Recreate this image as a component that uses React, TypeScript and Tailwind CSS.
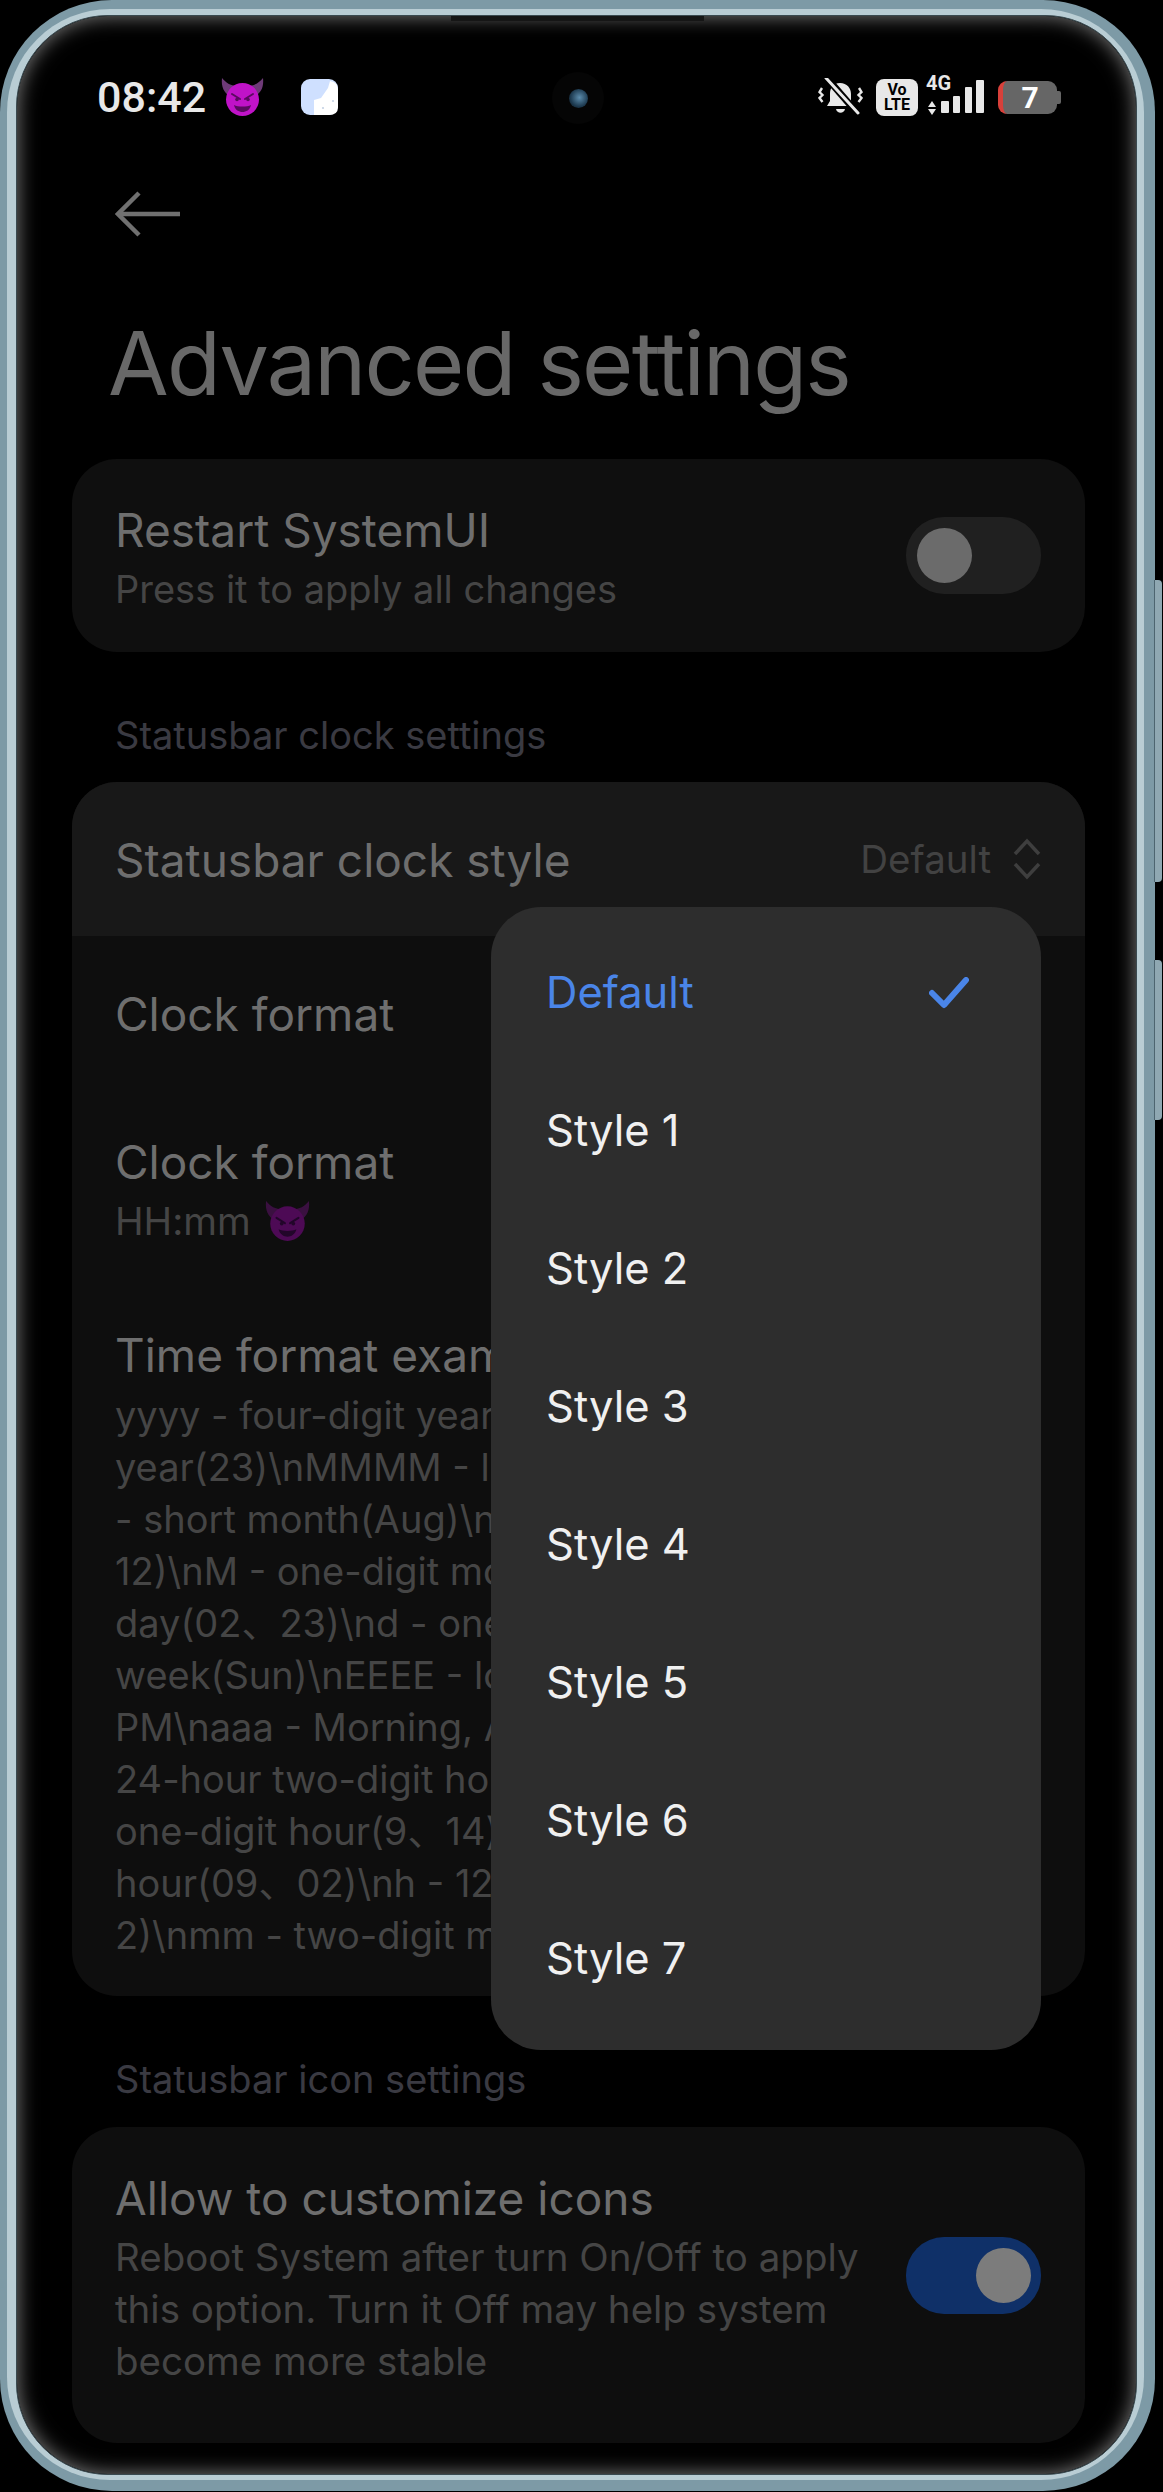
import React from "react";

function Devil({ className, face, horn, dark }: { className: string; face: string; horn: string; dark: string }) {
  return (
    <svg viewBox="0 0 43 38" className={className}>
      <path d="M1 0 C0 9 3 15 9 18 L17 8 C10 8 5 5 1 0Z" fill={horn} />
      <path d="M42 0 C43 9 40 15 34 18 L26 8 C33 8 38 5 42 0Z" fill={horn} />
      <circle cx="21.5" cy="21.5" r="16.5" fill={face} />
      <path d="M11 16 L19 21 M32 16 L24 21" stroke={dark} strokeWidth="2" strokeLinecap="round" />
      <circle cx="16" cy="21.5" r="1.8" fill={dark} />
      <circle cx="27" cy="21.5" r="1.8" fill={dark} />
      <path d="M13 27 C17 29 26 29 30 27 C29 32 25 34 21.5 34 C18 34 14 32 13 27Z" fill={dark} />
    </svg>
  );
}

function CatIcon() {
  return (
    <svg viewBox="0 0 37 36" className="w-[37px] h-[36px]">
      <rect width="37" height="36" rx="9" fill="#cfe0ff" />
      <path d="M13 36 L13 21 L20 19 L27 9 L29 2 Q37 3 37 11 L37 28 Q37 36 28 36Z" fill="#ffffff" />
      <circle cx="22" cy="29" r="1.1" fill="#c5d2e4" />
      <circle cx="32" cy="22" r="1.1" fill="#c5d2e4" />
    </svg>
  );
}

function BellOff() {
  return (
    <svg viewBox="0 0 45 38" className="w-[45px] h-[38px]">
      <path d="M22 5 C29 5 33 10 33 16 L33 23 L36 28 L9 28 L12 23 L12 16 C12 10 15 5 22 5Z" fill="#e8e8e8" />
      <path d="M18 31 H27 C26 36 19 36 18 31Z" fill="#e8e8e8" />
      <path d="M8 -1 L41 37" stroke="#000" strokeWidth="7" />
      <path d="M8 0 L40 35" stroke="#e8e8e8" strokeWidth="3" strokeLinecap="round" />
      <path d="M4 10 L1.5 14 L4.5 17 L1.5 20 L4.5 24" fill="none" stroke="#e8e8e8" strokeWidth="2.4" />
      <path d="M41 10 L43.5 14 L40.5 17 L43.5 20 L40.5 24" fill="none" stroke="#e8e8e8" strokeWidth="2.4" />
    </svg>
  );
}

function Signal() {
  return (
    <svg viewBox="0 0 43 33" className="w-[43px] h-[33px]" fill="#e8e8e8">
      <rect x="0" y="21" width="8" height="12" rx="1" />
      <rect x="12" y="16" width="7" height="17" rx="1" />
      <rect x="24" y="7" width="7" height="26" rx="1" />
      <rect x="35" y="0" width="8" height="33" rx="1" />
    </svg>
  );
}

function Toggle({ on }: { on: boolean }) {
  return (
    <div
      className={
        on
          ? "mt-[67px] w-[135px] h-[77px] rounded-[38px] bg-[#0f3068] flex items-center justify-end pr-[10px] shrink-0"
          : "w-[135px] h-[77px] rounded-[38px] bg-[#202020] flex items-center justify-start pl-[11px] shrink-0"
      }
    >
      <div className={on ? "w-[55px] h-[55px] rounded-full bg-[#7c7c7c]" : "w-[55px] h-[55px] rounded-full bg-[#6b6b6b]"} />
    </div>
  );
}

const exampleLines = [
  "yyyy - four-digit year(2023)\\nyy - two-digit",
  "year(23)\\nMMMM - long month(August)\\nMMM",
  "- short month(Aug)\\nMM - two-digit month(08、",
  "12)\\nM - one-digit month(8、12)\\ndd - two-digit",
  "day(02、23)\\nd - one-digit day(2、23)\\nEEE -",
  "week(Sun)\\nEEEE - long week(Sunday)\\naa - AM、",
  "PM\\naaa - Morning, Afternoon, Evening\\nHH -",
  "24-hour two-digit hour(09、14)\\nH - 24-hour",
  "one-digit hour(9、14)\\nhh - 12-hour two-digit",
  "hour(09、02)\\nh - 12-hour one-digit hour(9、",
  "2)\\nmm - two-digit minute(05、30)\\nm - one-",
];

const styles = ["Style 1", "Style 2", "Style 3", "Style 4", "Style 5", "Style 6", "Style 7"];

export default function App() {
  return (
    <div className="relative w-[1163px] h-[2492px] overflow-hidden bg-black font-[Inter,'Noto_Sans_CJK_SC',sans-serif]">
      <div className="absolute left-[1154px] top-[580px] w-[8px] h-[302px] rounded-r-[4px] bg-[#8fa8b2] border-l border-[#4d6570]" />
      <div className="absolute left-[1154px] top-[960px] w-[8px] h-[160px] rounded-r-[4px] bg-[#8fa8b2] border-l border-[#4d6570]" />
      <div className="w-[1155px] h-[2491px] rounded-[112px] bg-[#7d9aa6] pt-[9px] pb-[11px] pl-[7px] pr-[11px]">
        <div className="w-full h-full rounded-[103px] bg-[#b9cdd4] pt-[6px] pb-[5px] pl-[9px] pr-[7px]">
          <div className="relative w-full h-full rounded-[92px] bg-black border border-[#3a4a50] shadow-[inset_0_0_20px_rgba(255,255,255,0.5)]">
            <div className="absolute left-[434px] top-0 w-[253px] h-[5px] bg-[#161616]" />
            <div className="absolute left-[535px] top-[56px] w-[52px] h-[52px] rounded-full bg-[#050505] flex items-center justify-center">
              <div className="w-[19px] h-[19px] rounded-full bg-[radial-gradient(circle_at_55%_45%,#5c8cac,#1d3a50_60%,#0a0f14)]" />
            </div>

            <div className="pt-[62px] pl-[80px] pr-[75px] h-[100px] flex items-start">
              <div className="flex items-center h-[38px]">
                <span className="font-[Roboto,sans-serif] font-medium text-[43px] leading-[38px] text-[#e8e8e8]">08:42</span>
                <Devil className="w-[43px] h-[38px] ml-[15px]" face="#c013c8" horn="#6e3a78" dark="#5a0a60" />
                <div className="ml-[37px]"><CatIcon /></div>
              </div>
              <div className="ml-auto flex items-center h-[38px]">
                <BellOff />
                <div className="ml-[13px] w-[42px] h-[37px] rounded-[8px] bg-[#e8e8e8] flex flex-col items-center justify-center text-black font-[Roboto,sans-serif] font-bold text-[16px] leading-[15px]">
                  <span>Vo</span>
                  <span>LTE</span>
                </div>
                <div className="ml-[8px] relative w-[58px] h-[38px]">
                  <span className="absolute left-0 top-[-5px] font-[Roboto,sans-serif] font-bold text-[20px] leading-[20px] text-[#e8e8e8]">4G</span>
                  <div className="absolute left-[2px] top-[23px] flex flex-col gap-[2px]">
                    <div className="w-0 h-0 border-x-[4px] border-x-transparent border-b-[6px] border-b-[#e8e8e8]" />
                    <div className="w-0 h-0 border-x-[4px] border-x-transparent border-t-[6px] border-t-[#e8e8e8]" />
                  </div>
                  <div className="absolute left-[15px] top-[2px] flex"><Signal /></div>
                </div>
                <div className="ml-[14px] flex items-center">
                  <div className="w-[59px] h-[33px] rounded-[9px] bg-[#666666] border-l-[5px] border-[#d8403a] flex items-center justify-center text-white font-[Roboto,sans-serif] font-bold text-[30px] leading-[33px]">7</div>
                  <div className="w-[4px] h-[13px] rounded-r-[2px] bg-[#666666]" />
                </div>
              </div>
            </div>

            <div className="ml-[98px] mt-[75px] w-[66px] h-[46px]">
              <svg viewBox="0 0 66 46" className="w-[66px] h-[46px]" fill="none" stroke="#707070" strokeWidth="4.5">
                <path d="M24 2 L3 23 L24 44" />
                <path d="M3 23 H65" />
              </svg>
            </div>

            <h1 className="ml-[91px] mt-[76px] text-[88px] leading-[100px] tracking-[-1.8px] font-normal text-[#686868] whitespace-nowrap">Advanced settings</h1>

            <div className="ml-[55px] w-[1013px]">
              <div className="mt-[46px] h-[193px] rounded-[45px] bg-[#0f0f0f] flex items-center justify-between pl-[43px] pr-[44px]">
                <div className="pt-[5px]">
                  <div className="text-[46px] leading-[56px] text-[#6e6e6e]">Restart SystemUI</div>
                  <div className="mt-[5px] text-[38px] leading-[52px] text-[#454545]">Press it to apply all changes</div>
                </div>
                <Toggle on={false} />
              </div>

              <div className="mt-[59px] pl-[43px] text-[38px] leading-[48px] text-[#3a3a42]">Statusbar clock settings</div>

              <div className="relative mt-[23px] h-[1214px] rounded-[45px] bg-[#0e0e0e]">
                <div className="h-[154px] rounded-t-[45px] bg-[#181818] flex items-center justify-between pl-[43px] pr-[44px]">
                  <div className="pt-[2px] text-[46px] leading-[56px] text-[#6e6e6e]">Statusbar clock style</div>
                  <div className="flex items-center">
                    <span className="text-[38.5px] leading-[52px] text-[#424242]">Default</span>
                    <svg viewBox="0 0 28 42" className="ml-[22px] w-[28px] h-[42px]" fill="none" stroke="#3e3e3e" strokeWidth="3.5">
                      <path d="M2 16 L14 3 L26 16" />
                      <path d="M2 26 L14 39 L26 26" />
                    </svg>
                  </div>
                </div>
                <div className="pl-[43px] pt-[50px] text-[46px] leading-[56px] text-[#6e6e6e]">Clock format</div>
                <div className="pl-[43px] pt-[92px]">
                  <div className="text-[46px] leading-[56px] text-[#6e6e6e]">Clock format</div>
                  <div className="mt-[5px] flex items-center text-[38.5px] leading-[52px] text-[#454545]">
                    <span>HH:mm</span>
                    <Devil className="w-[45px] h-[40px] ml-[14px]" face="#4d0a55" horn="#3a1040" dark="#22062a" />
                  </div>
                </div>
                <div className="pl-[43px] pt-[80px] whitespace-nowrap">
                  <div className="text-[46px] leading-[56px] text-[#6e6e6e]">Time format examples</div>
                  <div className="mt-[6px] text-[38px] leading-[52px] text-[#454545]">
                    {exampleLines.map((l) => (
                      <div key={l}>{l}</div>
                    ))}
                  </div>
                </div>

                <div className="absolute left-[419px] top-[125px] w-[550px] h-[1143px] rounded-[50px] bg-[#2d2d2d] pt-[17px] pl-[55px] pr-[72px]">
                  <div className="h-[138px] flex items-center justify-between text-[43.5px] text-[#4a85e8]">
                    <span>Default</span>
                    <svg viewBox="0 0 40 32" className="w-[40px] h-[32px]" fill="none" stroke="#4a85e8" strokeWidth="6" strokeLinecap="round" strokeLinejoin="round">
                      <path d="M3 16 L15 28 L37 3" />
                    </svg>
                  </div>
                  {styles.map((s) => (
                    <div key={s} className="h-[138px] flex items-center text-[43.5px] text-[#f0f0f0]">{s}</div>
                  ))}
                </div>
              </div>

              <div className="mt-[59px] pl-[43px] text-[38px] leading-[48px] text-[#3a3a42]">Statusbar icon settings</div>

              <div className="mt-[24px] h-[316px] rounded-[45px] bg-[#0e0e0e] flex items-start justify-between pt-[43px] pl-[43px] pr-[44px]">
                <div className="w-[770px]">
                  <div className="text-[46px] leading-[56px] text-[#6e6e6e]">Allow to customize icons</div>
                  <div className="mt-[5px] text-[38.5px] leading-[52px] text-[#454545]">Reboot System after turn On/Off to apply this option. Turn it Off may help system become more stable</div>
                </div>
                <Toggle on={true} />
              </div>
            </div>
          </div>
        </div>
      </div>
    </div>
  );
}
